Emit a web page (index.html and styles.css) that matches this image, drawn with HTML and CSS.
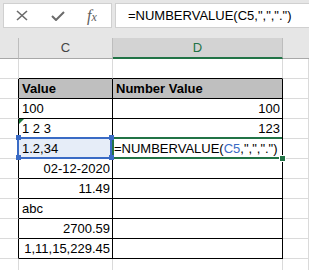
FILE: index.html
```html
<!DOCTYPE html>
<html>
<head>
<meta charset="utf-8">
<link rel="stylesheet" href="styles.css">
</head>
<body>
<div class="app">
  <div class="toolbar">
    <div class="iconbox">
      <svg class="ic-x" width="12" height="11" viewBox="0 0 12 11"><path d="M1 1 L11 10 M11 1 L1 10" stroke="#6b6b6b" stroke-width="1.6" fill="none"/></svg>
      <svg class="ic-check" width="14" height="10" viewBox="0 0 14 10"><path d="M1 5 L5 9 L13 1" stroke="#6b6b6b" stroke-width="2" fill="none"/></svg>
      <span class="fx">f<span class="fx-x">x</span></span>
    </div>
    <div class="fbox">=NUMBERVALUE(C5,",",".")</div>
  </div>
  <div class="sheet">
    <div class="row hdr">
      <div class="hc"></div><div class="hc">C</div><div class="hc sel">D</div><div class="hc last"></div>
    </div>
    <div class="row">
      <div class="c"></div><div class="c bb"></div><div class="c bb"></div><div class="c"></div>
    </div>
    <div class="row">
      <div class="c br"></div><div class="c br bb th">Value</div><div class="c br bb th">Number Value</div><div class="c"></div>
    </div>
    <div class="row">
      <div class="c br"></div><div class="c br bb">100</div><div class="c br bb r">100</div><div class="c"></div>
    </div>
    <div class="row">
      <div class="c br"></div><div class="c br bb tri">1 2 3</div><div class="c br bb r">123</div><div class="c"></div>
    </div>
    <div class="row">
      <div class="c br"></div>
      <div class="c br bb ref">1.2,34<span class="refbox"><i class="h tl"></i><i class="h tr"></i><i class="h bl"></i><i class="h br2"></i></span></div>
      <div class="c br bb edit"><span class="edbox"><i class="fill"></i></span>=NUMBERVALUE(<span class="blue">C5</span>,",",".")</div>
      <div class="c"></div>
    </div>
    <div class="row">
      <div class="c br"></div><div class="c br bb r">02-12-2020</div><div class="c br bb"></div><div class="c"></div>
    </div>
    <div class="row">
      <div class="c br"></div><div class="c br bb r">11.49</div><div class="c br bb"></div><div class="c"></div>
    </div>
    <div class="row">
      <div class="c br"></div><div class="c br bb">abc</div><div class="c br bb"></div><div class="c"></div>
    </div>
    <div class="row">
      <div class="c br"></div><div class="c br bb r">2700.59</div><div class="c br bb"></div><div class="c"></div>
    </div>
    <div class="row">
      <div class="c br"></div><div class="c br bb r">1,11,15,229.45</div><div class="c br bb"></div><div class="c"></div>
    </div>
    <div class="row">
      <div class="c"></div><div class="c"></div><div class="c"></div><div class="c"></div>
    </div>
  </div>
</div>
</body>
</html>
```
FILE: styles.css
```css
html, body {
  margin: 0;
  padding: 0;
  background: #ffffff;
  overflow: hidden;
}
.app {
  width: 309px;
  height: 270px;
  overflow: hidden;
  font-family: "Liberation Sans", Arial, sans-serif;
  font-size: 13px;
  color: #000;
}
.toolbar {
  height: 38px;
  background: #e6e6e6;
  display: flex;
  align-items: flex-start;
  padding-top: 3px;
  box-sizing: border-box;
}
.iconbox {
  margin-left: 3px;
  width: 109px;
  height: 25px;
  box-sizing: border-box;
  background: #fff;
  border: 1px solid #d0d0d0;
  display: flex;
  align-items: center;
}
.ic-x { margin-left: 12px; }
.ic-check { margin-left: 23px; }
.fx {
  margin-left: 22px;
  font-family: "Liberation Serif", "Times New Roman", serif;
  font-style: italic;
  font-size: 16px;
  color: #5e5e5e;
  line-height: 1;
}
.fx-x { font-size: 12px; }
.fbox {
  margin-left: 3px;
  flex: 1;
  margin-right: -6px;
  height: 25px;
  box-sizing: border-box;
  background: #fff;
  border: 1px solid #d0d0d0;
  padding-left: 12px;
  line-height: 23px;
  white-space: nowrap;
}
.row {
  display: grid;
  grid-template-columns: 19px 94px 170px 1fr;
  height: 20px;
}
.hc {
  background: #e6e6e6;
  border-right: 1px solid #bdbdbd;
  border-bottom: 1px solid #a8a8a8;
  box-sizing: border-box;
  height: 21px;
  line-height: 20px;
  text-align: center;
  color: #444;
  font-size: 13px;
}
.hdr { height: 21px; }
.hc.sel {
  background: #d3d3d3;
  color: #217346;
  border-bottom: 2px solid #217346;
}
.hc.last { border-right: none; }
.c {
  position: relative;
  box-sizing: border-box;
  height: 20px;
  border-right: 1px solid #dadada;
  border-bottom: 1px solid #dadada;
  line-height: 19px;
  padding: 0 2px 0 3px;
  white-space: nowrap;
}
.c.br { border-right-color: #000; }
.c.bb { border-bottom-color: #000; }
.c.r { text-align: right; }
.c.th {
  background: #bfbfbf;
  font-weight: bold;
}
.c.tri::before {
  content: "";
  position: absolute;
  left: 0;
  top: 0;
  border-top: 5px solid #1e7a3c;
  border-right: 5px solid transparent;
}
.c.ref { background: #e6edf8; }
.refbox {
  position: absolute;
  left: -2px;
  top: -2px;
  width: 95px;
  height: 22px;
  box-sizing: border-box;
  border: 2px solid #3a6bc5;
  z-index: 3;
}
.h {
  position: absolute;
  width: 5px;
  height: 5px;
  background: #3a6bc5;
}
.h.tl { left: -3px; top: -4px; }
.h.tr { right: -4px; top: -4px; }
.h.bl { left: -3px; bottom: -3px; }
.h.br2 { right: -4px; bottom: -3px; }
.c.edit { padding-left: 1px; overflow: visible; }
.edbox {
  position: absolute;
  left: -1px;
  top: -2px;
  width: 170px;
  height: 22px;
  box-sizing: border-box;
  border: 2px solid #217346;
  border-right: none;
  z-index: 2;
}
.fill {
  position: absolute;
  right: -3px;
  bottom: -4px;
  width: 5px;
  height: 5px;
  background: #217346;
  outline: 1px solid #fff;
}
.blue { color: #3a6bc5; }
```
